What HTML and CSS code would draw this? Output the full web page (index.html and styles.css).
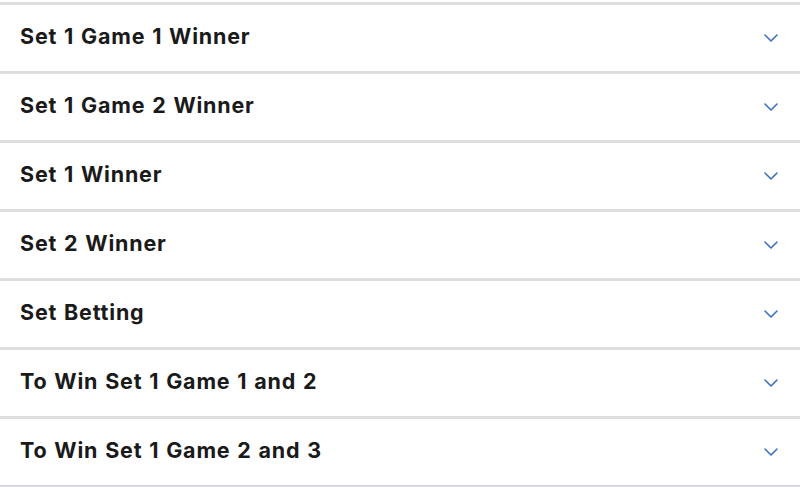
FILE: index.html
```html
<!DOCTYPE html>
<html>
<head>
<meta charset="utf-8">
<link rel="stylesheet" href="styles.css">
</head>
<body>
<div class="list">
  <div class="row"><span class="title">Set 1 Game 1 Winner</span><svg class="chev" viewBox="0 0 14 8"><path d="M1 1 L7 7 L13 1"/></svg></div>
  <div class="row"><span class="title">Set 1 Game 2 Winner</span><svg class="chev" viewBox="0 0 14 8"><path d="M1 1 L7 7 L13 1"/></svg></div>
  <div class="row"><span class="title">Set 1 Winner</span><svg class="chev" viewBox="0 0 14 8"><path d="M1 1 L7 7 L13 1"/></svg></div>
  <div class="row"><span class="title">Set 2 Winner</span><svg class="chev" viewBox="0 0 14 8"><path d="M1 1 L7 7 L13 1"/></svg></div>
  <div class="row"><span class="title">Set Betting</span><svg class="chev" viewBox="0 0 14 8"><path d="M1 1 L7 7 L13 1"/></svg></div>
  <div class="row"><span class="title">To Win Set 1 Game 1 and 2</span><svg class="chev" viewBox="0 0 14 8"><path d="M1 1 L7 7 L13 1"/></svg></div>
  <div class="row"><span class="title">To Win Set 1 Game 2 and 3</span><svg class="chev" viewBox="0 0 14 8"><path d="M1 1 L7 7 L13 1"/></svg></div>
  <div class="end"></div>
</div>
</body>
</html>
```
FILE: styles.css
```css
html, body {
  margin: 0;
  padding: 0;
  background: #ffffff;
}
.list {
  padding-top: 2px;
  display: flex;
  flex-direction: column;
}
.row {
  border-top: 3px solid #dedede;
  height: 66px;
  display: flex;
  align-items: center;
  justify-content: space-between;
  padding: 0 22px 0 20px;
}
.title {
  font-family: "Inter", "Noto Sans", sans-serif;
  font-weight: 700;
  font-size: 21.5px;
  line-height: 24px;
  color: #1a1a1a;
  letter-spacing: 0.8px;
  word-spacing: 1px;
  margin-top: -4px;
}
.chev {
  width: 14px;
  height: 8px;
  fill: none;
  stroke: #3d6fc2;
  stroke-width: 1.6;
  stroke-linecap: round;
  stroke-linejoin: round;
}
.end {
  border-top: 3px solid #d8dae0;
}
```
